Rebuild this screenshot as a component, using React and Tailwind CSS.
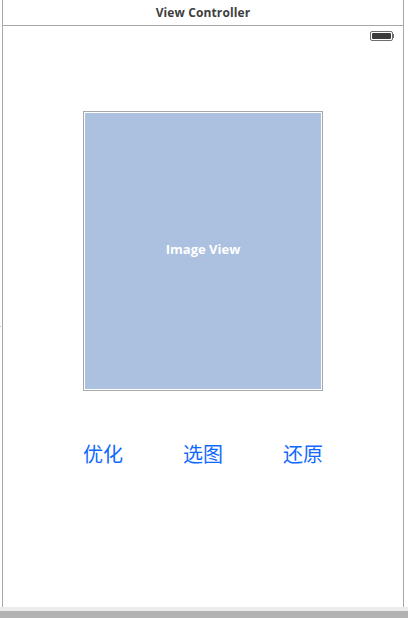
const App = () => {
  return (
    <div className="relative w-[408px] h-[618px] flex flex-col bg-white overflow-hidden font-['Inter','Liberation_Sans',sans-serif]">
      {/* Canvas frame */}
      <div className="h-[607px] ml-[2px] mr-[4px] border-x border-[#a8a8a8] flex flex-col">
        {/* Title bar */}
        <div className="h-[26px] shrink-0 flex items-center justify-center border-b border-[#a8a8a8] bg-white">
          <span className="text-[12px] font-bold tracking-[0.01em] text-[#404040] font-['Open_Sans',sans-serif]">View Controller</span>
        </div>

        {/* Status bar */}
        <div className="h-[20px] flex justify-end items-center pr-[9px]">
          <div className="flex items-center">
            <div className="w-[23px] h-[10px] rounded-[2px] border border-[#6e6e6e] p-[1px]">
              <div className="w-full h-full bg-[#3c3c3c] rounded-[1px]" />
            </div>
            <div className="w-[1px] h-[4px] bg-[#6e6e6e]" />
          </div>
        </div>

        {/* Image view */}
        <div className="pl-[80px] pt-[65px]">
          <div className="w-[240px] h-[280px] border border-[#a8a8a8] p-[1px] bg-white">
            <div className="w-full h-full bg-[#abc1df] flex items-center justify-center pb-[2px]">
              <span className="text-[13px] font-bold text-white font-['Open_Sans',sans-serif]">Image View</span>
            </div>
          </div>
        </div>

        {/* Buttons */}
        <div className="w-[240px] ml-[80px] mt-[50px] flex justify-between">
          {['优化', '选图', '还原'].map((label) => (
            <button key={label} className="w-[40px] h-[26px] leading-[26px] text-[20px] text-[#0f69ff] font-['Noto_Sans_CJK_SC',sans-serif]">
              {label}
            </button>
          ))}
        </div>
      </div>

      {/* Bottom bar */}
      <div className="h-[4px] bg-[#ececec]" />
      <div className="flex-1 bg-[#b3b3b3]" />

      {/* Stray ruler tick on the left edge */}
      <div className="absolute left-0 top-[326px] w-[1px] h-[1px] bg-[#c4c4c4]" />
    </div>
  );
};

export default App;
